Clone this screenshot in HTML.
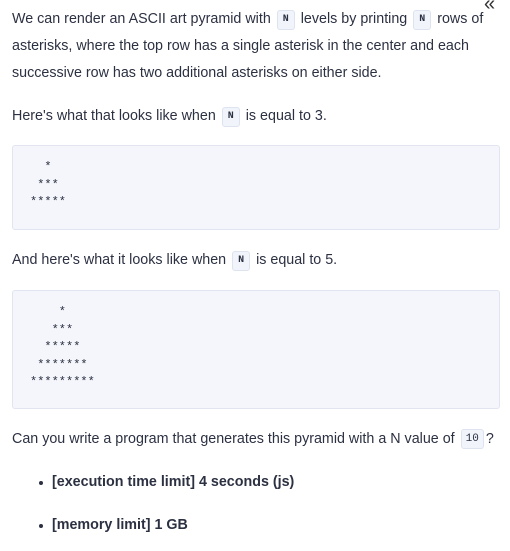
<!DOCTYPE html>
<html><head><meta charset="utf-8"><style>
body{margin:0;width:510px;height:551px;background:#fff;font-family:"Liberation Sans",sans-serif;color:#2c3142;font-size:14.3px;position:relative;overflow:hidden}
.p{position:absolute;left:12px;white-space:nowrap;line-height:27px}
code{display:inline-block;font-family:"Liberation Mono",monospace;font-size:10px;font-weight:bold;background:#f1f4fb;border:1px solid #dde3ef;border-radius:3px;padding:0 5px;line-height:18px;vertical-align:2px;margin:0 2px}
code.n{font-weight:normal;font-size:11px;padding:0 4px}
.pre{position:absolute;left:12px;width:488px;background:#f4f6fb;border:1px solid #e0e5ef;border-radius:3px;font-family:"Liberation Mono",monospace;font-size:12px;line-height:17.5px;white-space:pre;padding:13px 0 0 17px;box-sizing:border-box}
.b{position:absolute;left:52px;font-weight:bold;line-height:20px}
.b:before{content:"";position:absolute;left:-13px;top:9px;width:4px;height:4px;border-radius:50%;background:#2c3142}
</style></head><body>
<div style="position:absolute;left:484px;top:-7px;font-size:20px;color:#333">«</div>
<div class="p" style="top:6px">We can render an ASCII art pyramid with <code>N</code> levels by printing <code>N</code> rows of<br>asterisks, where the top row has a single asterisk in the center and each<br>successive row has two additional asterisks on either side.</div>
<div class="p" style="top:103px">Here's what that looks like when <code>N</code> is equal to 3.</div>
<div class="pre" style="top:145px;height:85px">  *
 ***
*****</div>
<div class="p" style="top:247px">And here's what it looks like when <code>N</code> is equal to 5.</div>
<div class="pre" style="top:290px;height:119px">    *
   ***
  *****
 *******
*********</div>
<div class="p" style="top:426px">Can you write a program that generates this pyramid with a N value of <code class="n">10</code>?</div>
<div class="b" style="top:472px">[execution time limit] 4 seconds (js)</div>
<div class="b" style="top:515px">[memory limit] 1 GB</div>
</body></html>
